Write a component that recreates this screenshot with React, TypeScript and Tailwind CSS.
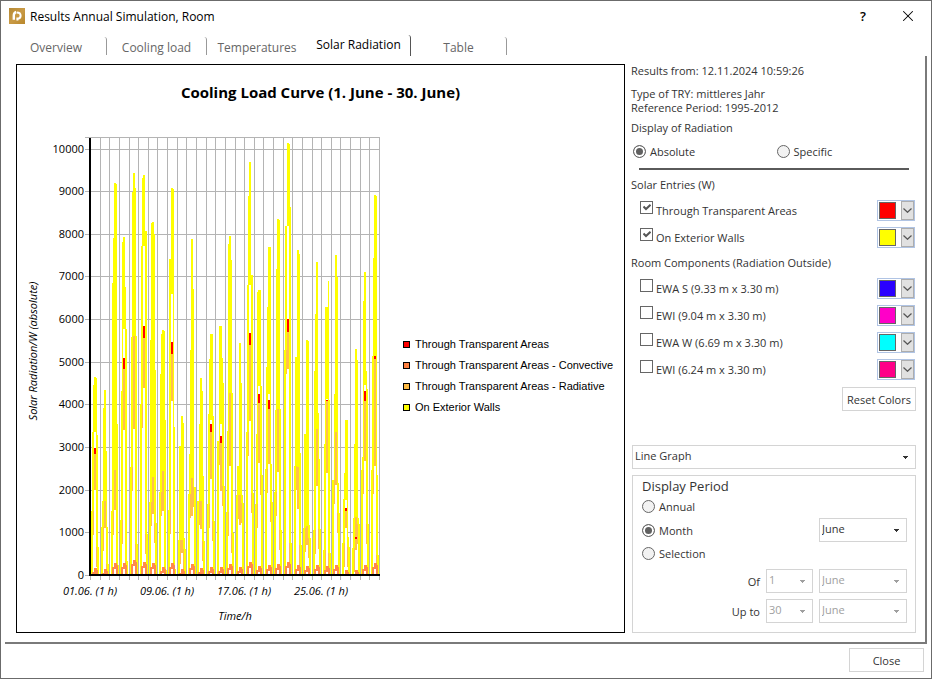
import { Fragment, useState } from 'react';
import type { ReactNode } from 'react';
import { X } from 'lucide-react';

// One entry per day of June, values are y positions on the plot:
// peak, left flank, right flank, bottom of the peak, left leg, right leg,
// outer left leg, outer right leg, radiative top / bottom, total top / bottom, convective top
type Day = number[];

const DAYS: Day[] = [
  [377, 385, 378, 432, 432, 435, 511, 547, 454, 490, 448, 454, 568],
  [390, 408, 451, 501, 501, 527, 527, 564, 501, 528, 0, 0, 569],
  [183, 238, 184, 470, 283, 424, 511, 565, 470, 510, 0, 0, 563],
  [237, 242, 287, 329, 391, 329, 520, 561, 369, 430, 358, 369, 563],
  [173, 192, 188, 336, 337, 336, 467, 544, 336, 429, 0, 0, 560],
  [175, 178, 231, 246, 246, 231, 404, 534, 338, 388, 326, 338, 562],
  [222, 223, 234, 477, 340, 370, 502, 523, 477, 514, 0, 0, 563],
  [330, 334, 331, 471, 374, 420, 492, 570, 471, 511, 0, 0, 567],
  [188, 259, 189, 294, 259, 427, 510, 569, 354, 401, 342, 354, 563],
  [416, 446, 423, 540, 446, 538, 540, 549, 540, 553, 0, 0, 569],
  [239, 350, 289, 478, 454, 487, 494, 487, 478, 516, 0, 0, 564],
  [378, 424, 391, 501, 501, 476, 501, 541, 501, 529, 0, 0, 568],
  [334, 359, 334, 420, 414, 416, 504, 521, 432, 479, 424, 432, 567],
  [326, 326, 358, 424, 441, 383, 441, 486, 443, 491, 436, 443, 567],
  [236, 244, 260, 393, 431, 393, 512, 533, 393, 466, 0, 0, 564],
  [343, 466, 383, 495, 466, 495, 495, 503, 495, 525, 0, 0, 567],
  [162, 196, 275, 285, 285, 275, 432, 493, 345, 421, 333, 345, 562],
  [290, 292, 290, 386, 434, 386, 504, 475, 403, 463, 394, 403, 566],
  [247, 307, 247, 394, 367, 464, 469, 502, 409, 464, 400, 409, 565],
  [219, 269, 220, 409, 410, 409, 492, 530, 409, 472, 0, 0, 564],
  [143, 226, 144, 226, 226, 207, 350, 543, 332, 369, 319, 332, 562],
  [250, 357, 254, 467, 357, 453, 466, 545, 467, 509, 0, 0, 565],
  [340, 434, 341, 526, 434, 525, 528, 538, 526, 545, 0, 0, 566],
  [262, 314, 413, 429, 371, 459, 530, 529, 429, 486, 0, 0, 565],
  [307, 307, 281, 399, 444, 400, 550, 553, 401, 473, 400, 401, 566],
  [255, 394, 277, 432, 480, 483, 480, 513, 432, 485, 0, 0, 565],
  [420, 473, 420, 500, 499, 537, 543, 547, 511, 528, 508, 511, 570],
  [349, 444, 360, 517, 518, 518, 548, 524, 517, 550, 537, 539, 570],
  [272, 301, 371, 385, 457, 389, 470, 524, 401, 461, 391, 401, 565],
  [195, 258, 196, 356, 356, 475, 470, 555, 359, 466, 356, 359, 563],
];

const PLOT = { left: 90, right: 379, top: 137, bottom: 575 };
const STEP = (PLOT.right - PLOT.left) / 30;
const TICKS = [0, 1000, 2000, 3000, 4000, 5000, 6000, 7000, 8000, 9000, 10000];
const TIME_LABELS = [
  { x: 90, label: '01.06. (1 h)' },
  { x: 167, label: '09.06. (1 h)' },
  { x: 244, label: '17.06. (1 h)' },
  { x: 321, label: '25.06. (1 h)' },
];

const LEGEND = [
  { label: 'Through Transparent Areas', color: 'bg-[#ff0000]' },
  { label: 'Through Transparent Areas - Convective', color: 'bg-[#ff8040]' },
  { label: 'Through Transparent Areas - Radiative', color: 'bg-[#ffbb44]' },
  { label: 'On Exterior Walls', color: 'bg-[#ffff00]' },
];

const SOLAR_ENTRIES = [
  { id: 'transparent', label: 'Through Transparent Areas', color: 'bg-[#ff0000]', checked: true },
  { id: 'walls', label: 'On Exterior Walls', color: 'bg-[#ffff00]', checked: true },
];

const ROOM_COMPONENTS = [
  { id: 'ewa-s', label: 'EWA S (9.33 m x 3.30 m)', color: 'bg-[#2a00ff]', checked: false },
  { id: 'ewi-1', label: 'EWI (9.04 m x 3.30 m)', color: 'bg-[#ff00c8]', checked: false },
  { id: 'ewa-w', label: 'EWA W (6.69 m x 3.30 m)', color: 'bg-[#00ffff]', checked: false },
  { id: 'ewi-2', label: 'EWI (6.24 m x 3.30 m)', color: 'bg-[#ff0088]', checked: false },
];

const TABS = [
  { label: 'Overview', width: 'w-[101px]' },
  { label: 'Cooling load', width: 'w-[100px]' },
  { label: 'Temperatures', width: 'w-[100px]' },
  { label: 'Solar Radiation', width: 'w-[104px]' },
  { label: 'Table', width: 'w-[96px]' },
];

function DayBars({ day, index }: { day: Day; index: number }) {
  const [peak, left, right, base, legL, legR, outL, outR, radTop, radEnd, totTop, totEnd, conv] = day;
  const x = Math.round(PLOT.left + STEP * (index + 0.5) - 0.4);
  const bottom = PLOT.bottom;
  const bar = (dx: number, w: number, from: number, to: number, fill: string) => (
    <rect x={x + dx} y={from} width={w} height={Math.max(0, to - from)} fill={fill} />
  );

  return (
    <g>
      {bar(0, 2, base, bottom, '#ffffff')}
      {bar(-1, 1, outL, bottom, '#ffffff')}
      {bar(2, 1, outR, bottom, '#ffffff')}
      {bar(-1, 1, outL, Math.min(outL + 24, bottom), '#ffc04c')}
      {bar(2, 1, outR, Math.min(outR + 20, bottom), '#ffc04c')}
      {bar(-1, 1, left, outL, '#ffff00')}
      {bar(0, 2, peak, base, '#ffff00')}
      {bar(2, 1, right, outR, '#ffff00')}
      {bar(-2, 1, legL, bottom, '#ffff00')}
      {bar(3, 1, legR, bottom, '#ffff00')}
      {bar(-3, 1, outL, bottom, '#ffff00')}
      {bar(4, 1, outR, bottom, '#ffff00')}
      {bar(0, 2, radTop, radEnd, '#ffc04c')}
      {totTop > 0 && bar(0, 2, totTop, totEnd, '#ff0000')}
      {bar(-2, 2, conv + 4, bottom, '#ff8a4c')}
      {bar(0, 3, conv, Math.min(conv + 6, bottom), '#ff8a4c')}
      {bar(2, 2, conv + 2, bottom - 1, '#ff8a4c')}
    </g>
  );
}

/**
 * Hourly radiation over the month, with both axes
 */
function LoadCurve() {
  const toY = (value: number) => Math.round(PLOT.bottom - (value / 1000) * 42.65);

  return (
    <svg
      className="shrink-0"
      width="373"
      height="505"
      viewBox="17 125 373 505"
      role="img"
      aria-label="Solar radiation in June"
    >
      <g shapeRendering="crispEdges">
        {TICKS.map((t) => (
          <rect key={t} x={PLOT.left - 5} y={toY(t)} width={PLOT.right - PLOT.left + 6} height="1" fill="#b4b4b4" />
        ))}
        <rect x={PLOT.left - 5} y={PLOT.top} width={PLOT.right - PLOT.left + 6} height="1" fill="#b4b4b4" />
        {Array.from({ length: 31 }, (_, i) => (
          <rect key={i} x={Math.round(PLOT.left + i * STEP)} y={PLOT.top} width="1" height="443" fill="#b4b4b4" />
        ))}
        {DAYS.map((day, i) => (
          <DayBars key={i} day={day} index={i} />
        ))}
        <rect x="89" y="138" width="2" height="438" fill="#000000" />
        <rect x="89" y="574" width="291" height="2" fill="#000000" />
      </g>
      <g className="text-[11px]" fill="#000000">
        {TICKS.map((t) => (
          <text key={t} x="84" y={toY(t) + 4} textAnchor="end">
            {t}
          </text>
        ))}
      </g>
      <g className="text-[11px] italic" fill="#000000" textAnchor="middle">
        {TIME_LABELS.map((t) => (
          <text key={t.label} x={t.x} y="595">
            {t.label}
          </text>
        ))}
        <text x="235" y="620">
          Time/h
        </text>
        <text transform="translate(37 351) rotate(-90)">Solar Radiation/W (absolute)</text>
      </g>
    </svg>
  );
}

function Radio(props: { name: string; label: string; defaultChecked?: boolean }) {
  return (
    <label className="flex items-center gap-1">
      <input
        type="radio"
        name={props.name}
        defaultChecked={props.defaultChecked}
        className="size-[13px] appearance-none rounded-full border border-[#666] bg-[#f2f2f2] checked:bg-[#606060] checked:shadow-[inset_0_0_0_2px_#fff]"
      />
      {props.label}
    </label>
  );
}

function Dropdown(props: { label: string; value: string; className: string; disabled?: boolean }) {
  return (
    <div className={`relative h-6 ${props.className}`}>
      <select
        aria-label={props.label}
        disabled={props.disabled}
        className="block h-full w-full appearance-none border border-[#d4d4d4] bg-white pb-[3px] pl-[2px] text-[#333] disabled:text-[#a0a0a0] disabled:opacity-100"
      >
        <option>{props.value}</option>
      </select>
      <svg
        className={`pointer-events-none absolute top-[11px] right-2 ${props.disabled ? 'text-[#a0a0a0]' : 'text-[#333]'}`}
        width="5"
        height="3"
        viewBox="0 0 5 3"
        fill="currentColor"
        shapeRendering="crispEdges"
      >
        <path d="M0 0h5v1h-1v1h-1v1h-1v-1h-1v-1h-1z" />
      </svg>
    </div>
  );
}

interface Entry {
  id: string;
  label: string;
  color: string;
  checked: boolean;
}

function EntryList({ entries }: { entries: Entry[] }) {
  return (
    <ul className="flex flex-col gap-[6px] pl-[9px] pr-px">
      {entries.map((entry) => (
        <li key={entry.id} className="flex h-[21px] items-start justify-between">
          <label className="flex items-start gap-[3px]">
            <span className="relative mt-px block size-[13px]">
              <input
                type="checkbox"
                defaultChecked={entry.checked}
                className="peer block size-[13px] appearance-none border border-[#666] bg-white"
              />
              <svg
                className="pointer-events-none invisible absolute top-[3px] left-[3px] peer-checked:visible"
                width="8"
                height="7"
                viewBox="0 0 8 7"
                fill="none"
                stroke="#555"
                strokeWidth="2"
              >
                <path d="M0.5 2.5L3 5L7.5 0.8" />
              </svg>
            </span>
            <span className="leading-[22px]">{entry.label}</span>
          </label>
          <button
            type="button"
            aria-label={`Color of ${entry.label}`}
            className="flex h-[21px] w-[38px] items-center justify-between border border-[#b0c4e4] bg-white pl-px"
          >
            <span className={`size-[17px] border border-[#666] ${entry.color}`} />
            <span className="flex h-[19px] w-[13px] items-center justify-center border border-[#adadad] bg-[#e1e1e1]">
              <svg width="9" height="5" viewBox="0 0 9 5" fill="none" stroke="#555" strokeWidth="1.2">
                <path d="M0.5 0.5L4.5 4.3L8.5 0.5" />
              </svg>
            </span>
          </button>
        </li>
      ))}
    </ul>
  );
}

function PeriodRow({ children }: { children: ReactNode }) {
  return <div className="flex h-6 items-center justify-end gap-[6px]">{children}</div>;
}

export default function App() {
  const [activeTab, setActiveTab] = useState('Solar Radiation');

  return (
    <div className="flex min-h-screen flex-col border border-[#6b6b6b] bg-white font-['Open_Sans','Noto_Sans',sans-serif] text-[11px] leading-[13px] text-[#333]">
      {/* Title bar */}
      <header className="flex h-[30px] items-center pl-2 text-[12px] text-black">
        <svg width="16" height="16" viewBox="0 0 16 16" aria-hidden="true">
          <defs>
            <linearGradient id="logo" x1="0" y1="0" x2="1" y2="1">
              <stop offset="0" stopColor="#b58a35" />
              <stop offset="0.5" stopColor="#c99a45" />
              <stop offset="1" stopColor="#b8872c" />
            </linearGradient>
          </defs>
          <rect width="16" height="16" fill="url(#logo)" />
          <path d="M4.8 11.8V7.5Q4.8 4.8 7.2 4" fill="none" stroke="#fff" strokeWidth="2.4" />
          <path d="M7.8 4.4Q11.6 4.4 11.6 7.8Q11.6 10.4 9 10.8M8.4 9.6V12.6" fill="none" stroke="#fff" strokeWidth="2" />
        </svg>
        <h1 className="flex-1 pl-[5px]">Results Annual Simulation, Room</h1>
        <button type="button" aria-label="Help" className="w-11 text-[13px] font-semibold">
          ?
        </button>
        <button type="button" aria-label="Close window" className="flex w-[46px] justify-center">
          <X className="size-[18px]" strokeWidth={1.4} />
        </button>
      </header>

      {/* Tabs */}
      <nav role="tablist" className="flex h-[25px] items-end pl-[5px] text-[12px]">
        {TABS.map((tab) => {
          const active = tab.label === activeTab;
          return (
            <button
              key={tab.label}
              type="button"
              role="tab"
              aria-selected={active}
              onClick={() => setActiveTab(tab.label)}
              className={`rounded-tr-[3px] ${tab.label === 'Temperatures' ? '' : 'border-r'} ${tab.width} ${
                active ? 'h-[21px] border-[#555] pb-[2px] text-black' : 'mb-px h-[18px] border-[#999] pt-[3px] text-[#666]'
              }`}
            >
              {tab.label}
            </button>
          );
        })}
      </nav>

      {/* Tab page */}
      <main className="mr-1 ml-1 flex flex-1 gap-[6px] border-r-2 border-b-2 border-[#7a7a7a] pt-2 pr-[9px] pb-[9px] pl-[11px]">
        <section className="flex min-w-0 flex-1 flex-col border border-black">
          <h2 className="pt-[17px] pb-[23px] text-center text-[15px] leading-5 font-bold text-black">
            Cooling Load Curve (1. June - 30. June)
          </h2>
          <div className="flex min-w-0 flex-1">
            <LoadCurve />
            <ul className="flex flex-col gap-2 pt-[213px] pl-[13px] font-['Liberation_Sans',sans-serif] whitespace-nowrap text-black">
              {LEGEND.map((item) => (
                <li key={item.label} className="flex items-center gap-[5px]">
                  <span className={`size-[7px] border border-black ${item.color}`} />
                  {item.label}
                </li>
              ))}
            </ul>
          </div>
        </section>

        <aside className="flex w-[285px] shrink-0 flex-col">
          <p>Results from: 12.11.2024 10:59:26</p>
          <p className="pt-[10px] leading-[14px]">
            Type of TRY: mittleres Jahr
            <br />
            Reference Period: 1995-2012
          </p>
          <p className="pt-[6px]">Display of Radiation</p>
          <div className="grid grid-cols-2 gap-1 pt-[11px] pl-[2px]">
            <Radio name="display" label="Absolute" defaultChecked />
            <Radio name="display" label="Specific" />
          </div>
          <hr className="mt-[10px] mr-[7px] ml-2 border-t-2 border-[#5a5a5a]" />

          {[
            { title: 'Solar Entries (W)', entries: SOLAR_ENTRIES },
            { title: 'Room Components (Radiation Outside)', entries: ROOM_COMPONENTS },
          ].map((group) => (
            <Fragment key={group.title}>
              <h3 className="pt-2 pb-[9px]">{group.title}</h3>
              <EntryList entries={group.entries} />
            </Fragment>
          ))}

          <button type="button" className="mt-[7px] h-6 w-[74px] self-end border border-[#d4d4d4]">
            Reset Colors
          </button>

          <div className="mt-auto pl-px">
            <Dropdown label="Chart type" value="Line Graph" className="w-full" />
            <div
              role="group"
              aria-labelledby="period"
              className="mt-[6px] border border-[#d4d4d4] pt-[2px] pr-2 pb-[9px] pl-[9px]"
            >
              <h3 id="period" className="text-[13px] leading-4">
                Display Period
              </h3>
              <div className="flex h-6 items-center">
                <Radio name="period" label="Annual" />
              </div>
              <div className="flex h-6 items-center justify-between">
                <Radio name="period" label="Month" defaultChecked />
                <Dropdown label="Month" value="June" className="w-[88px]" />
              </div>
              <div className="flex h-[22px] items-center">
                <Radio name="period" label="Selection" />
              </div>
              <div className="flex flex-col gap-[6px] pt-[5px]">
                <PeriodRow>
                  <span>Of</span>
                  <Dropdown label="From day" value="1" className="w-[47px]" disabled />
                  <Dropdown label="From month" value="June" className="w-[88px]" disabled />
                </PeriodRow>
                <PeriodRow>
                  <span>Up to</span>
                  <Dropdown label="To day" value="30" className="w-[47px]" disabled />
                  <Dropdown label="To month" value="June" className="w-[88px]" disabled />
                </PeriodRow>
              </div>
            </div>
          </div>
        </aside>
      </main>

      {/* Footer */}
      <footer className="flex justify-end pt-1 pr-[7px] pb-[6px]">
        <button type="button" className="h-6 w-[75px] border border-[#d4d4d4]">
          Close
        </button>
      </footer>
    </div>
  );
}
